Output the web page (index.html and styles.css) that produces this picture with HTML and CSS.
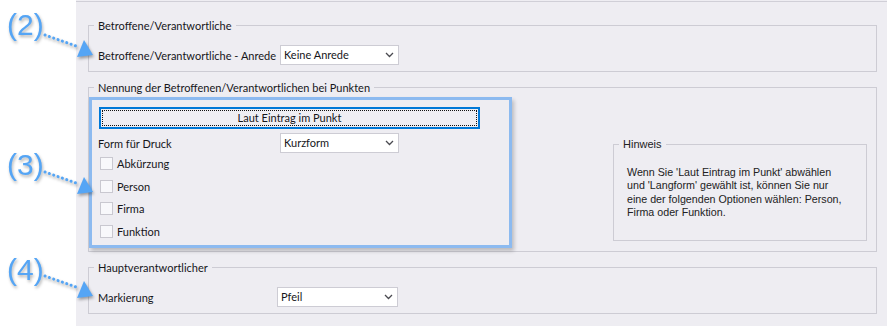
FILE: index.html
```html
<!DOCTYPE html>
<html lang="de">
<head>
<meta charset="utf-8">
<title>Betroffene/Verantwortliche</title>
<link rel="stylesheet" href="styles.css">
</head>
<body>
<div class="page">
  <div class="panel">
    <div class="topline"></div>

    <fieldset class="group g1">
      <legend>Betroffene/Verantwortliche</legend>
      <div class="row">
        <span class="lbl">Betroffene/Verantwortliche - Anrede</span>
        <div class="select"><span>Keine Anrede</span><svg class="chev" width="9" height="6" viewBox="0 0 9 6"><polyline points="1,1 4.5,4.5 8,1"/></svg></div>
      </div>
    </fieldset>

    <fieldset class="group g2">
      <legend>Nennung der Betroffenen/Verantwortlichen bei Punkten</legend>
      <div class="g2-body">
        <div class="hl">
          <div class="btn">Laut Eintrag im Punkt</div>
          <div class="row row-form">
            <span class="lbl lbl-form">Form für Druck</span>
            <div class="select"><span>Kurzform</span><svg class="chev" width="9" height="6" viewBox="0 0 9 6"><polyline points="1,1 4.5,4.5 8,1"/></svg></div>
          </div>
          <ul class="checks">
            <li><span class="cb"></span>Abkürzung</li>
            <li><span class="cb"></span>Person</li>
            <li><span class="cb"></span>Firma</li>
            <li><span class="cb"></span>Funktion</li>
          </ul>
        </div>
        <fieldset class="hint">
          <legend>Hinweis</legend>
          <p>Wenn Sie 'Laut Eintrag im Punkt' abwählen<br>und 'Langform' gewählt ist, können Sie nur<br>eine der folgenden Optionen wählen: Person,<br>Firma oder Funktion.</p>
        </fieldset>
      </div>
    </fieldset>

    <fieldset class="group g3">
      <legend>Hauptverantwortlicher</legend>
      <div class="row">
        <span class="lbl lbl-mark">Markierung</span>
        <div class="select select-wide"><span>Pfeil</span><svg class="chev" width="9" height="6" viewBox="0 0 9 6"><polyline points="1,1 4.5,4.5 8,1"/></svg></div>
      </div>
    </fieldset>
  </div>

  <span class="note n2">(2)</span>
  <span class="note n3">(3)</span>
  <span class="note n4">(4)</span>
  <svg class="arrows" width="100" height="326" viewBox="0 0 100 326">
    <g class="arrow">
      <line x1="45" y1="35" x2="79" y2="47"/>
      <polygon points="93,55 84,40 77,57"/>
    </g>
    <g class="arrow">
      <line x1="45" y1="172" x2="79" y2="184"/>
      <polygon points="93,192 84,177 77,194"/>
    </g>
    <g class="arrow">
      <line x1="45" y1="276" x2="79" y2="288"/>
      <polygon points="93,296 84,281 77,298"/>
    </g>
  </svg>
</div>
</body>
</html>
```

FILE: styles.css
```css
* { box-sizing: border-box; }
html, body { margin: 0; padding: 0; background: #ffffff; }
body {
  font-family: "Lato", "Noto Sans", sans-serif;
  font-size: 11px;
  color: #16161a;
}
.page {
  position: relative;
  width: 887px;
  height: 326px;
  overflow: hidden;
}
.panel {
  margin-left: 76px;
  height: 326px;
  background: #eeedf2;
  padding: 0 10px 0 12px;
  display: flex;
  flex-direction: column;
}
.panel > * { flex: none; }
.topline {
  height: 1px;
  margin-top: 1px;
  background: #d0cfd7;
  margin-left: -12px;
  margin-right: -10px;
}
fieldset.group, fieldset.hint {
  margin: 0;
  padding: 0;
  border: 1px solid #cdccd4;
  min-width: 0;
}
legend {
  padding: 0 4px;
  margin-left: 5px;
  line-height: 15px;
  font-size: 11px;
  white-space: nowrap;
}
fieldset.g1 { margin-top: 16px; }
fieldset.g2 { margin-top: 8px; }
fieldset.g3 { margin-top: 8px; }

.row {
  display: flex;
  align-items: center;
}
.g1 .row, .g3 .row { padding: 12px 0 6px 9px; }
.lbl { flex: none; width: 182px; line-height: 15px; white-space: nowrap; }
.lbl-mark { width: 179px; }

.select {
  flex: none;
  width: 119px;
  height: 20px;
  background: #ffffff;
  border: 1px solid #cdccd4;
  display: flex;
  align-items: center;
  justify-content: space-between;
  padding: 0 4px 0 3px;
  line-height: 16px;
}
.select-wide { width: 121px; }
.chev { display: block; }
.chev polyline { fill: none; stroke: #4a4a50; stroke-width: 1.3; }

.g2-body {
  display: flex;
  align-items: flex-start;
  padding-bottom: 3px;
}
.hl {
  flex: none;
  width: 423px;
  height: 151px;
  margin-top: 2px;
  border: 3px solid #8cbaf0;
  box-shadow: 2px 3px 4px rgba(0, 0, 0, 0.22);
  padding: 7px 0 0 7px;
}
.btn {
  width: 381px;
  height: 22px;
  border: 2px solid #0078d7;
  outline: 1px dotted #111;
  outline-offset: -4px;
  background: #efeef3;
  text-align: center;
  line-height: 18px;
}
.row-form { margin-top: 4px; margin-left: -1px; }
.lbl-form { width: 182px; }

.checks {
  list-style: none;
  margin: 3px 0 0 0;
  padding: 0 0 0 1px;
}
.checks li {
  height: 22.5px;
  display: flex;
  align-items: flex-start;
  line-height: 15px;
}
.cb {
  flex: none;
  width: 13px;
  height: 13px;
  margin-top: 1px;
  margin-right: 4px;
  background: #f8f8fb;
  border: 1px solid #c9c8d0;
}

fieldset.hint {
  flex: none;
  width: 254px;
  margin-top: 43px;
  margin-left: 101px;
  font-family: "Liberation Sans", Arial, sans-serif;
  font-size: 10.7px;
  color: #222;
}
.hint legend {
  font-family: "Liberation Sans", Arial, sans-serif;
  font-size: 11px;
  line-height: 13px;
}
.hint p {
  margin: 0;
  padding: 15px 0 21px 13px;
  line-height: 13.3px;
  white-space: nowrap;
}

.note {
  position: absolute;
  left: 7px;
  font-family: "Liberation Sans", Arial, sans-serif;
  font-size: 30px;
  line-height: 30px;
  color: #55a5f5;
  filter: drop-shadow(1px 2px 1.5px rgba(0, 0, 0, 0.3));
}
.n2 { top: 10px; }
.n3 { top: 150px; }
.n4 { top: 255px; }
.arrows {
  position: absolute;
  left: 0;
  top: 0;
  filter: drop-shadow(1px 2px 1.5px rgba(0, 0, 0, 0.35));
}
.arrow line {
  stroke: #55a5f5;
  stroke-width: 3;
  stroke-linecap: round;
  stroke-dasharray: 0.1 4.5;
}
.arrow polygon { fill: #55a5f5; }
```
